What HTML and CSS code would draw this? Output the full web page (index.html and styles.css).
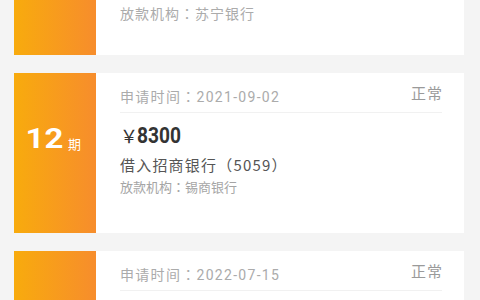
FILE: index.html
```html
<!DOCTYPE html>
<html lang="zh-CN">
<head>
<meta charset="utf-8">
<title>借款记录</title>
<link rel="stylesheet" href="styles.css">
</head>
<body>
<div class="list">
  <div class="card card--first">
    <div class="term"><span class="term-num">6</span><span class="term-unit">期</span></div>
    <div class="info">
      <div class="head"><span class="date">申请时间：2021-03-18</span><span class="status">正常</span></div>
      <div class="amount"><span class="yen">￥</span><span class="num">5000</span></div>
      <div class="bank">借入招商银行（5059）</div>
      <div class="org org--wide">放款机构：苏宁银行</div>
    </div>
  </div>
  <div class="card">
    <div class="term"><span class="term-num">12</span><span class="term-unit">期</span></div>
    <div class="info">
      <div class="head"><span class="date">申请时间：2021-09-02</span><span class="status">正常</span></div>
      <div class="amount"><span class="yen">￥</span><span class="num">8300</span></div>
      <div class="bank">借入招商银行（5059）</div>
      <div class="org">放款机构：锡商银行</div>
    </div>
  </div>
  <div class="card">
    <div class="term"><span class="term-num">12</span><span class="term-unit">期</span></div>
    <div class="info">
      <div class="head"><span class="date">申请时间：2022-07-15</span><span class="status">正常</span></div>
      <div class="amount"><span class="yen">￥</span><span class="num">6000</span></div>
      <div class="bank">借入招商银行（5059）</div>
      <div class="org">放款机构：锡商银行</div>
    </div>
  </div>
</div>
</body>
</html>
```
FILE: styles.css
```css
html, body {
  margin: 0;
  padding: 0;
  background: #f4f4f4;
  font-family: "Noto Sans CJK SC", Roboto, sans-serif;
  overflow: hidden;
}
.list {
  display: flex;
  flex-direction: column;
  gap: 18px;
  margin-top: -101px;
  padding: 0 16px 0 14px;
}
.card {
  display: flex;
  height: 160px;
  background: #fff;
}
.card--first {
  height: 156px;
}
.term {
  width: 82px;
  flex: none;
  display: flex;
  justify-content: center;
  align-items: flex-start;
  padding-top: 51px;
  box-sizing: border-box;
  background: linear-gradient(90deg, #f8ab0d 0%, #f78d2c 100%);
  color: #fff;
}
.term-num {
  font-family: Roboto, sans-serif;
  font-size: 27px;
  font-weight: 700;
  line-height: 30px;
  display: inline-block;
  transform: scaleX(1.22);
  margin-right: 8px;
}
.term-unit {
  font-size: 13px;
  line-height: 16px;
  padding-top: 12px;
}
.info {
  flex: 1;
  padding: 0 22px 0 24px;
  min-width: 0;
}
.head {
  height: 40px;
  box-sizing: border-box;
  display: flex;
  justify-content: space-between;
  align-items: flex-start;
  padding-top: 10px;
  border-bottom: 1px solid #f1f1f1;
}
.date {
  font-family: Roboto, "Noto Sans CJK TC", sans-serif;
  font-feature-settings: "locl" 0;
  font-size: 14px;
  letter-spacing: 1.3px;
  line-height: 19px;
  margin-top: 5px;
  color: #ababab;
}
.status {
  font-size: 15px;
  letter-spacing: 1px;
  margin-right: -1px;
  line-height: 19px;
  color: #9a9a9a;
}
.amount {
  margin-top: 7px;
  height: 30px;
  display: flex;
  align-items: center;
  color: #333;
}
.yen {
  font-size: 18px;
  width: 17px;
  color: #333;
}
.num {
  font-family: Roboto, sans-serif;
  display: inline-block;
  font-size: 22px;
  font-weight: 700;
  transform: scaleX(0.87);
  transform-origin: left center;
}
.bank {
  margin-top: 4px;
  font-size: 15px;
  letter-spacing: 1.2px;
  line-height: 22px;
  color: #555;
}
.org {
  font-family: "Noto Sans CJK TC", sans-serif;
  font-feature-settings: "locl" 0;
  margin-top: 1px;
  font-size: 13px;
  line-height: 20px;
  color: #a5a5a5;
}
.org--wide {
  font-size: 14px;
  letter-spacing: 1px;
  color: #ababab;
}
```
